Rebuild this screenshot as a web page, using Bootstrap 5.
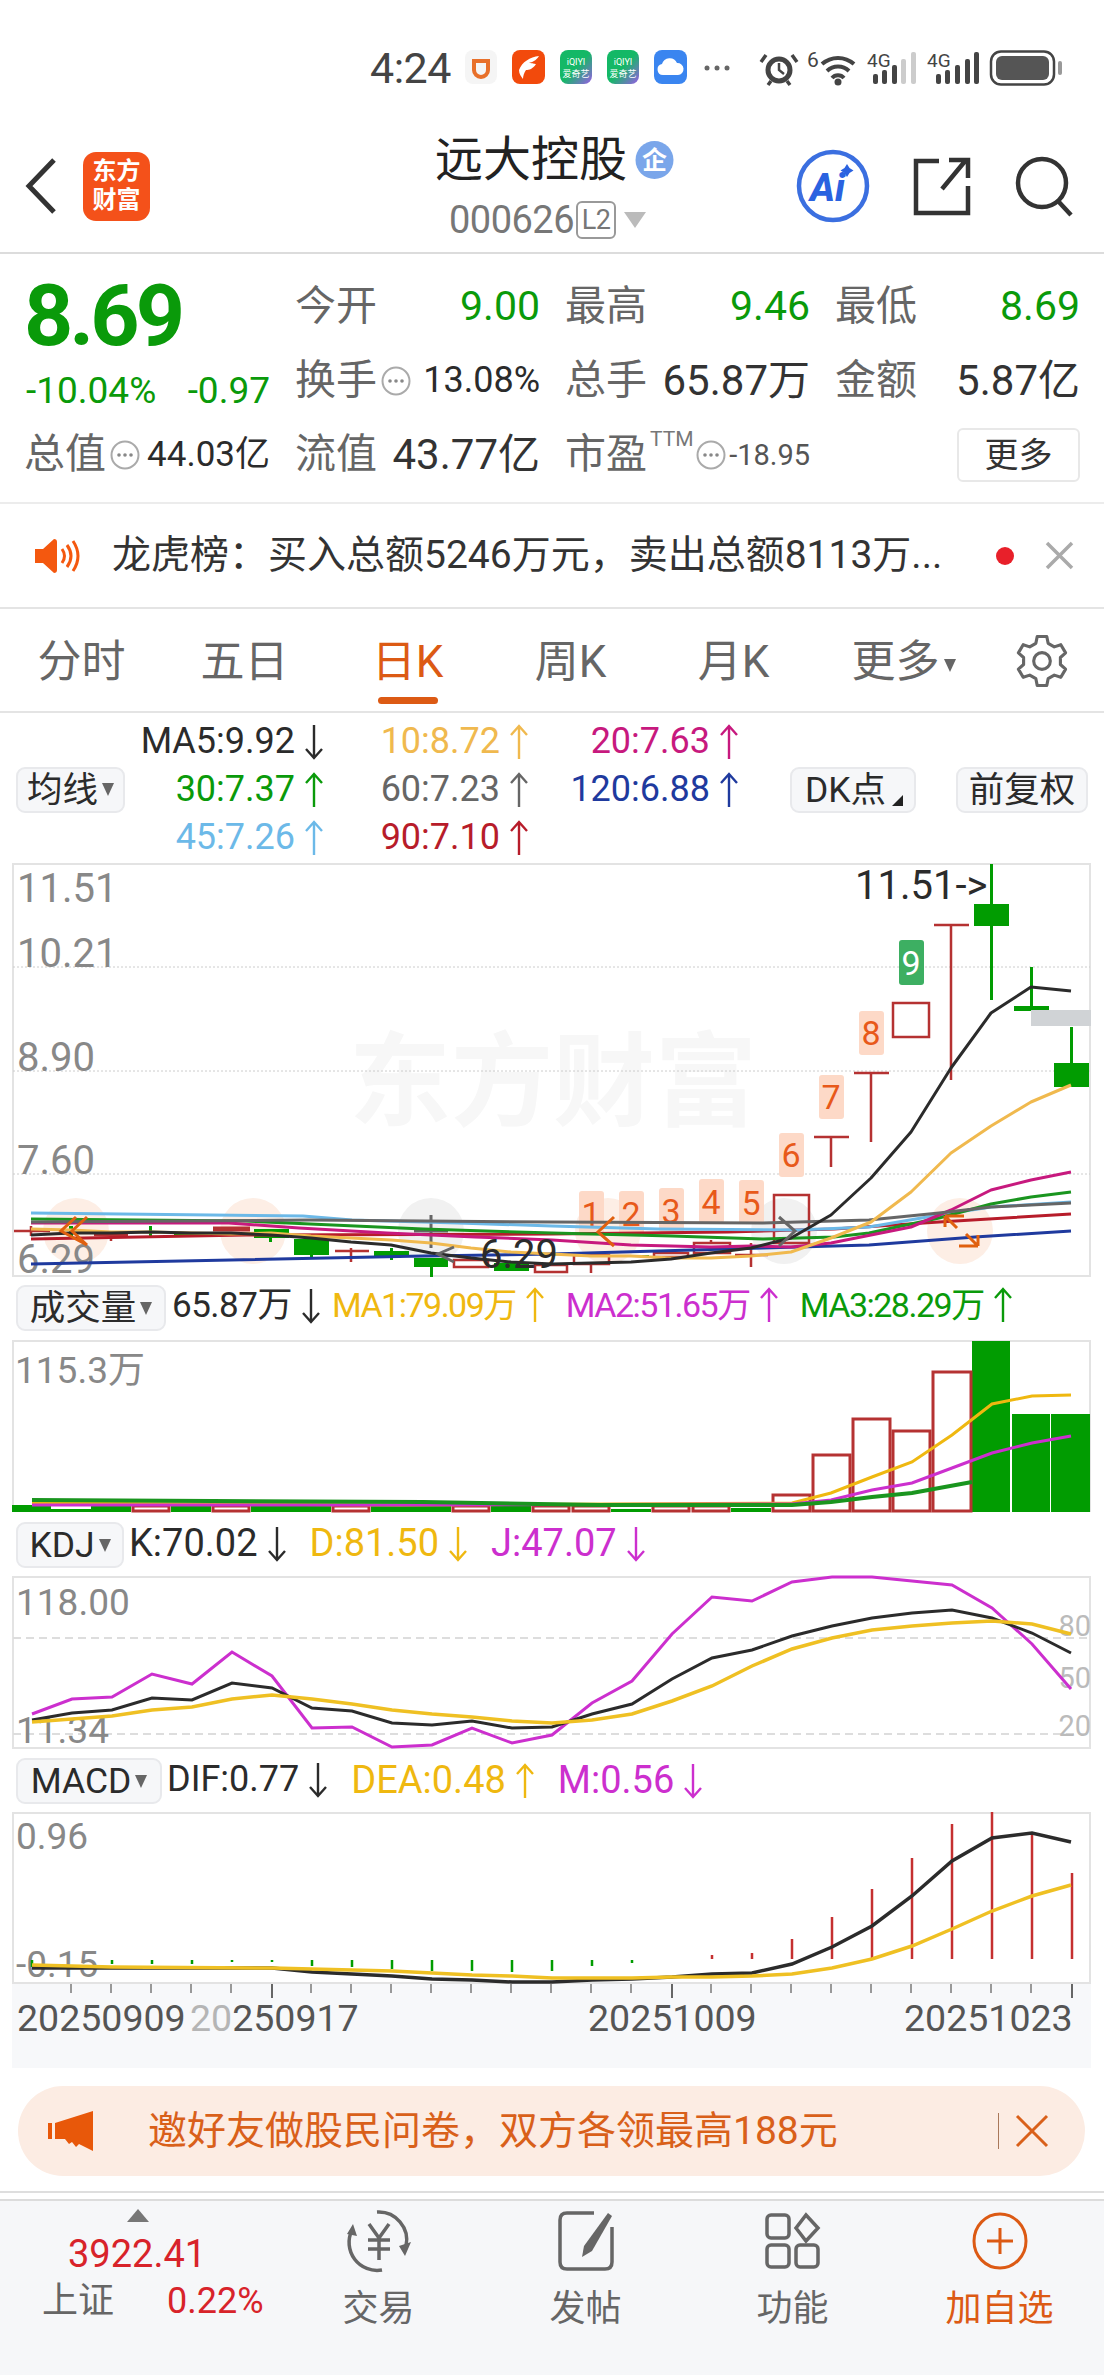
<!DOCTYPE html>
<html lang="zh-CN">
<head>
<meta charset="UTF-8">
<meta name="viewport" content="width=device-width, initial-scale=1.0">
<title>远大控股</title>
<link href="https://cdn.jsdelivr.net/npm/bootstrap@5.3.0/dist/css/bootstrap.min.css" rel="stylesheet">
<script src="https://cdn.jsdelivr.net/npm/bootstrap@5.3.0/dist/js/bootstrap.bundle.min.js"></script>
<style>
  html, body { margin: 0; background: #fff; }
  body { width: 1104px; height: 2376px; overflow: hidden; font-family: Roboto, "Noto Sans CJK SC", sans-serif; color: #2b2b2b; line-height: 1.2; }
  svg { display: block; flex: none; overflow: visible; }
  svg text { font-family: Roboto, "Noto Sans CJK SC", sans-serif; }
  .c-green { color: #0a9a0a; }
  .c-red { color: #d8232a; }
  .c-gray { color: #666; }

  .status-row { height: 100px; padding: 50px 0 0 370px; }
  .clock { font-size: 43px; width: 82px; color: #444; line-height: 36px; letter-spacing: -0.5px; }
  .app-ico { margin-right: 15px; }

  .head-row { height: 154px; display: grid; grid-template-columns: 1fr auto 1fr; border-bottom: 2px solid #dcdcdc; }
  .head-side { padding-top: 20px; }
  .logo-box { width: 67px; height: 69px; border-radius: 13px; background: #f4511a; color: #fff; font-size: 24px; line-height: 29px; font-weight: 700; text-align: center; padding-top: 5px; margin-left: 25px; }
  .title-col { padding-top: 30px; text-align: center; }
  .title-main { font-size: 48px; line-height: 60px; color: #222; margin-left: 5px; }
  .title-code { font-size: 38px; line-height: 60px; color: #777; letter-spacing: -0.5px; margin-left: -9px; }
  .l2-tag { font-size: 27px; line-height: 34px; height: 38px; width: 40px; border: 2px solid #999; border-radius: 6px; margin: 0 8px 0 2px; text-align: center; color: #777; }
  .tri-down { width: 0; height: 0; border-left: 11px solid transparent; border-right: 11px solid transparent; border-top: 16px solid #bbb; }
  .tri-small { width: 0; height: 0; border-left: 6px solid transparent; border-right: 6px solid transparent; border-top: 13px solid #666; margin-left: 4px; }
  .ico-gap { margin-left: 43px; }

  .quote-box { height: 250px; padding: 16px 0 0 24px; display: grid; grid-template-columns: 246px 245px 245px 245px; grid-auto-rows: 74px; column-gap: 25px; border-bottom: 2px solid #ececec; }
  .price-cell { grid-row: span 2; }
  .price-big { font-size: 86px; font-weight: 700; line-height: 86px; margin-top: 3px; letter-spacing: -4px; }
  .price-sub { font-size: 37px; line-height: 40px; margin: 12px 0 0 2px; }
  .q-label { font-size: 41px; color: #666; white-space: nowrap; }
  .q-val { font-size: 41px; }
  .q-mid { font-size: 36px; }
  .q-tight { font-size: 35px; }
  .q-num { font-size: 42px; color: #333; }
  .ttm-mark { font-size: 21px; color: #777; align-self: flex-start; margin: -3px 2px 0 3px; }
  .q-small { font-size: 29px; color: #555; }
  .more-btn { width: 123px; height: 54px; padding: 0; font-size: 34px; background: #fff; border: 2px solid #e8e8e8; color: #333; border-radius: 6px; }

  .notice-row { height: 105px; padding-left: 33px; border-bottom: 2px solid #e4e4e4; }
  .notice-text { font-size: 39px; margin-left: 33px; width: 888px; color: #333; white-space: nowrap; }
  .notice-dot { width: 18px; height: 18px; border-radius: 50%; background: #e8202a; margin: 0 31px 0 -4px; }

  .tab-row { height: 104px; border-bottom: 2px solid #e4e4e4; position: relative; }
  .tab-item { width: 163px; text-align: center; font-size: 44px; color: #666; padding-top: 26px; line-height: 54px; }
  .tab-on { color: #dc5a14; position: relative; }
  .tab-on::after { content: ""; position: absolute; left: 52px; top: 88px; width: 60px; height: 7px; border-radius: 4px; background: #dc5a14; }
  .tab-more { padding-left: 14px; }
  .gear-wrap { margin: 26px 0 0 38px; }

  .ma-row { height: 150px; padding: 3px 0 0 16px; }
  .ma-grid { display: grid; grid-template-columns: 200px 205px 210px; grid-auto-rows: 48px; }
  .ma-cell { font-size: 36px; justify-content: flex-end; display: flex; align-items: center; gap: 8px; white-space: nowrap; }
  .ctl-btn { height: 46px; padding: 0 6px; font-size: 35.5px; line-height: 42px; background: #f6f7f9; border: 2px solid #e8e9ec; border-radius: 9px; color: #2b2b2b; display: flex; align-items: center; justify-content: center; white-space: nowrap; }
  .dk-corner { width: 0; height: 0; border-left: 11px solid transparent; border-bottom: 11px solid #222; align-self: flex-end; margin: 0 -2px 5px 6px; }

  .ind-row { height: 63px; padding: 8px 0 0 16px; }
  .ind-txt { font-size: 38px; white-space: nowrap; gap: 8px; }
  .ind-vol { font-size: 35px; letter-spacing: -0.5px; margin-left: 6px; }
  .ind-ma { font-size: 34px; letter-spacing: -1.5px; margin-left: 20px; }
  .ind-ma1 { margin-left: 10px; }
  .ind-gap { margin-left: 22px; }
  .arr-ico { width: 22px; height: 38px; fill: none; stroke: currentColor; stroke-width: 2.4; }
  .c-blk { color: #2b2b2b; }
  .c-yel { color: #efb810; }
  .c-mag { color: #cc2fce; }
  .c-grn { color: #0a9a0a; }

  .promo-wrap { height: 125px; padding: 18px 19px 0 18px; border-bottom: 2px solid #dedede; }
  .promo-box { height: 90px; border-radius: 45px; background: #fcece3; color: #d9601a; padding: 0 36px 0 30px; }
  .promo-text { font-size: 39px; margin-left: 54px; white-space: nowrap; flex-grow: 1; }
  .promo-sep { width: 1px; height: 36px; background: #a9785a; margin-right: 16px; }

  .foot-row { margin-top: 6px; height: 176px; background: #f6f7f9; border-top: 2px solid #dcdcdc; }
  .idx-col { width: 276px; padding: 8px 0 0 42px; position: relative; }
  .tri-up { width: 0; height: 0; border-left: 11px solid transparent; border-right: 11px solid transparent; border-bottom: 13px solid #777; margin-left: 85px; }
  .idx-num { font-size: 38px; line-height: 44px; margin: 10px 0 0 26px; }
  .idx-line { font-size: 36px; line-height: 44px; margin-top: 3px; }
  .foot-cell { width: 207px; text-align: center; padding-top: 8px; font-size: 36px; line-height: 44px; color: #666; }
  .foot-ico { height: 64px; margin: 0 auto 14px; }
  .c-org { color: #dc5a14; }
</style>
</head>
<body>
<svg width="0" height="0" class="position-absolute">
  <symbol id="up" viewBox="0 0 22 38"><path d="M11 36V3M3 12L11 3L19 12"/></symbol>
  <symbol id="dn" viewBox="0 0 22 38"><path d="M11 2V35M3 26L11 35L19 26"/></symbol>
  <symbol id="dots" viewBox="0 0 30 30"><circle cx="15" cy="15" r="13.5" fill="none" stroke="#aaa" stroke-width="2"/><circle cx="9" cy="15" r="1.8" fill="#888"/><circle cx="15" cy="15" r="1.8" fill="#888"/><circle cx="21" cy="15" r="1.8" fill="#888"/></symbol>
  <linearGradient id="iq" x1="0" y1="0" x2="1" y2="1"><stop offset="0.5" stop-color="#14b866"/><stop offset="1" stop-color="#9a5be8"/></linearGradient>
</svg>

<!-- status bar -->
<div class="status-row d-flex align-items-start">
  <div class="clock">4:24</div>
  <svg class="app-ico" style="margin-left:13px" width="32" height="34" viewBox="0 0 32 34"><rect width="32" height="34" rx="8" fill="#f5f5f5"/><path d="M9 11h14v9a7 7 0 0 1-14 0z" fill="none" stroke="#e8702a" stroke-width="4"/></svg>
  <svg class="app-ico" width="33" height="34" viewBox="0 0 33 34"><rect width="33" height="34" rx="8" fill="#f24a0c"/><path d="M7 20C10 12 18 7 27 6C24 11 20 12 17 13C21 13 22 14 24 14C21 19 17 20 14 20C12 23 11 26 11 29C9 26 7 24 7 20z" fill="#fff"/></svg>
  <svg class="app-ico" width="32" height="34" viewBox="0 0 32 34"><rect width="32" height="34" rx="8" fill="url(#iq)"/><text x="16" y="15" font-size="9" fill="#fff" text-anchor="middle">iQIYI</text><text x="16" y="27" font-size="9" fill="#fff" text-anchor="middle">爱奇艺</text></svg>
  <svg class="app-ico" width="32" height="34" viewBox="0 0 32 34"><rect width="32" height="34" rx="8" fill="url(#iq)"/><text x="16" y="15" font-size="9" fill="#fff" text-anchor="middle">iQIYI</text><text x="16" y="27" font-size="9" fill="#fff" text-anchor="middle">爱奇艺</text></svg>
  <svg width="33" height="34" viewBox="0 0 33 34"><rect width="33" height="34" rx="8" fill="#3a85f0"/><path d="M9 25a5.500 5.500 0 0 1-1-10.900A8 8 0 0 1 23 13a6 6 0 0 1 1 12z" fill="#fff"/></svg>
  <svg width="380" height="36" viewBox="0 0 380 36">
    <g fill="#666"><circle cx="20" cy="18" r="2.500"/><circle cx="30" cy="18" r="2.500"/><circle cx="40" cy="18" r="2.500"/></g>
    <g fill="none" stroke="#444">
      <circle cx="92" cy="20" r="11" stroke-width="5"/><path d="M92 13v7l5 4" stroke-width="2.500"/>
      <path d="M79 5l-5 7M105 5l5 7M84 31l-3 4M100 31l3 4" stroke-width="3.500"/>
      <path d="M135 14a24 24 0 0 1 32 0M140 21a16 16 0 0 1 22 0M145 28a8 8 0 0 1 12 0" stroke-width="4"/>
    </g>
    <circle cx="151" cy="32" r="3.500" fill="#444"/>
    <text x="120" y="17" font-size="21" fill="#444">6</text>
    <text x="180" y="17" font-size="19" fill="#444">4G</text>
    <g fill="#444"><rect x="186" y="24" width="5" height="10" rx="2"/><rect x="195" y="20" width="5" height="14" rx="2"/><rect x="205" y="15" width="5" height="19" rx="2"/></g>
    <g fill="#ccc"><rect x="214" y="9" width="5" height="25" rx="2"/><rect x="224" y="2" width="5" height="32" rx="2"/></g>
    <text x="240" y="17" font-size="19" fill="#444">4G</text>
    <g fill="#444"><rect x="249" y="24" width="5" height="10" rx="2"/><rect x="258" y="20" width="5" height="14" rx="2"/><rect x="268" y="15" width="5" height="19" rx="2"/><rect x="278" y="9" width="5" height="25" rx="2"/><rect x="287" y="2" width="5" height="32" rx="2"/></g>
    <rect x="304" y="1.500" width="63" height="33" rx="10" fill="none" stroke="#444" stroke-width="2.500"/>
    <rect x="309" y="6" width="53" height="24" rx="6" fill="#555"/>
    <rect x="371" y="11" width="4" height="14" rx="2" fill="#999"/>
  </svg>
</div>

<!-- header -->
<div class="head-row">
  <div class="head-side d-flex align-items-center ps-4">
    <svg width="34" height="56" viewBox="0 0 34 56"><path d="M30 2L5 28L30 54" fill="none" stroke="#333" stroke-width="5"/></svg>
    <div class="logo-box">东方<br>财富</div>
  </div>
  <div class="title-col">
    <div class="title-main d-flex align-items-center justify-content-center gap-2">远大控股
      <svg width="39" height="38" viewBox="0 0 39 38"><circle cx="19.500" cy="19" r="19" fill="#7aa6ea"/><text x="19.500" y="28" font-size="25" font-weight="700" fill="#fff" text-anchor="middle">企</text></svg>
    </div>
    <div class="title-code d-flex align-items-center justify-content-center">000626<span class="l2-tag">L2</span><span class="tri-down"></span></div>
  </div>
  <div class="head-side d-flex align-items-center justify-content-end">
    <svg width="74" height="74" viewBox="0 0 74 74"><circle cx="37" cy="37" r="34" fill="none" stroke="#3b6fe0" stroke-width="4.500"/><text x="14" y="52" font-size="38" font-weight="800" font-style="italic" fill="#2a62e0">Ai</text><path d="M51 15l2.500 4 4 2.500-4 2.500-2.500 4-2.500-4-4-2.500 4-2.500z" fill="#2a62e0"/></svg>
    <svg class="ico-gap" width="58" height="60" viewBox="0 0 58 60"><path d="M26 5H3V57H55V30M29 33L53 4M36 4H55V22" fill="none" stroke="#333" stroke-width="4.500"/></svg>
    <svg class="ico-gap" style="margin-right:30px" width="60" height="60" viewBox="0 0 60 60"><circle cx="28" cy="27" r="24" fill="none" stroke="#333" stroke-width="4.500"/><path d="M44 45L57 59" stroke="#333" stroke-width="4.500"/></svg>
  </div>
</div>

<!-- quote -->
<div class="quote-box">
  <div class="price-cell c-green">
    <div class="price-big">8.69</div>
    <div class="price-sub d-flex justify-content-between"><span>-10.04%</span><span>-0.97</span></div>
  </div>
  <div class="d-flex justify-content-between align-items-center"><span class="q-label">今开</span><span class="q-val c-green">9.00</span></div>
  <div class="d-flex justify-content-between align-items-center"><span class="q-label">最高</span><span class="q-val c-green">9.46</span></div>
  <div class="d-flex justify-content-between align-items-center"><span class="q-label">最低</span><span class="q-val c-green">8.69</span></div>
  <div class="d-flex justify-content-between align-items-center"><span class="d-flex align-items-center gap-1"><span class="q-label">换手</span><svg width="30" height="30"><use href="#dots"/></svg></span><span class="q-mid">13.08%</span></div>
  <div class="d-flex justify-content-between align-items-center"><span class="q-label">总手</span><span class="q-num">65.87万</span></div>
  <div class="d-flex justify-content-between align-items-center"><span class="q-label">金额</span><span class="q-num">5.87亿</span></div>
  <div class="d-flex justify-content-between align-items-center"><span class="d-flex align-items-center gap-1"><span class="q-label">总值</span><svg width="30" height="30"><use href="#dots"/></svg></span><span class="q-tight">44.03亿</span></div>
  <div class="d-flex justify-content-between align-items-center"><span class="q-label">流值</span><span class="q-num">43.77亿</span></div>
  <div class="d-flex justify-content-between align-items-center"><span class="d-flex align-items-center"><span class="q-label">市盈</span><span class="ttm-mark">TTM</span><svg width="30" height="30"><use href="#dots"/></svg></span><span class="q-small">-18.95</span></div>
  <div class="d-flex justify-content-end align-items-center"><button class="btn more-btn" type="button">更多</button></div>
</div>

<!-- notice -->
<div class="notice-row d-flex align-items-center">
  <svg width="46" height="36" viewBox="0 0 46 36"><path d="M2 11h8L21 1q3 0 3 3V32q0 3-3 3L10 25H2z" fill="#f4580f"/><path d="M29 11q5 7 0 14M34 7q8 11 0 22M40 3q10 15 0 30" fill="none" stroke="#f4580f" stroke-width="3"/></svg>
  <div class="notice-text">龙虎榜：买入总额5246万元，卖出总额8113万...</div>
  <div class="notice-dot"></div>
  <svg width="29" height="29" viewBox="0 0 29 29"><path d="M2 2L27 27M27 2L2 27" stroke="#aaa" stroke-width="3.500"/></svg>
</div>

<!-- tabs -->
<div class="tab-row d-flex">
  <div class="tab-item">分时</div>
  <div class="tab-item">五日</div>
  <div class="tab-item tab-on">日K</div>
  <div class="tab-item">周K</div>
  <div class="tab-item">月K</div>
  <div class="tab-item tab-more d-flex justify-content-center"><span>更多</span><span class="tri-small mt-4"></span></div>
  <div class="gear-wrap">
    <svg width="52" height="52" viewBox="0 0 50 50"><path d="M20.400 1.400L29.600 1.400L30.900 8L36.800 11.400L43.100 9.300L47.700 17.200L42.700 21.600L42.700 28.400L47.700 32.800L43.100 40.700L36.800 38.600L30.900 42L29.600 48.600L20.400 48.600L19.100 42L13.200 38.600L6.900 40.700L2.300 32.800L7.300 28.400L7.300 21.600L2.300 17.200L6.900 9.300L13.200 11.400L19.100 8z" fill="none" stroke="#666" stroke-width="3" stroke-linejoin="round"/><circle cx="25" cy="25" r="8" fill="none" stroke="#666" stroke-width="3"/></svg>
  </div>
</div>

<!-- moving averages -->
<div class="ma-row d-flex align-items-center">
  <button class="btn ctl-btn" style="width:109px" type="button">均线<span class="tri-small"></span></button>
  <div class="ma-grid">
    <div class="ma-cell c-blk">MA5:9.92<svg class="arr-ico"><use href="#dn"/></svg></div>
    <div class="ma-cell" style="color:#f0b94e">10:8.72<svg class="arr-ico"><use href="#up"/></svg></div>
    <div class="ma-cell" style="color:#c7197e">20:7.63<svg class="arr-ico"><use href="#up"/></svg></div>
    <div class="ma-cell c-grn">30:7.37<svg class="arr-ico"><use href="#up"/></svg></div>
    <div class="ma-cell" style="color:#666">60:7.23<svg class="arr-ico"><use href="#up"/></svg></div>
    <div class="ma-cell" style="color:#1f3a9e">120:6.88<svg class="arr-ico"><use href="#up"/></svg></div>
    <div class="ma-cell" style="color:#6cb9e8">45:7.26<svg class="arr-ico"><use href="#up"/></svg></div>
    <div class="ma-cell" style="color:#b71c2a">90:7.10<svg class="arr-ico"><use href="#up"/></svg></div>
  </div>
  <button class="btn ctl-btn" style="width:126px;margin-left:50px" type="button">DK点<span class="dk-corner"></span></button>
  <button class="btn ctl-btn" style="width:132px;margin-left:40px" type="button">前复权</button>
</div>

<!-- k-line chart -->
<svg width="1104" height="414" viewBox="0 863 1104 414">
  <rect x="13" y="864" width="1077" height="412" fill="#fff" stroke="#e3e3e3" stroke-width="2"/>
  <text x="349" y="1118" font-size="102" font-weight="700" fill="#f7f7f7">东方财富</text>
  <path d="M13 967H1090M13 1071H1090M13 1174H1090" stroke="#ccc" stroke-dasharray="2 2"/>
  <g fill="#fdeee5"><circle cx="76" cy="1231" r="33"/><circle cx="253" cy="1231" r="33"/><circle cx="608" cy="1231" r="33"/><circle cx="960" cy="1231" r="33"/></g>
  <g fill="#f1f1f1"><circle cx="431" cy="1231" r="33"/><circle cx="784" cy="1231" r="33"/></g>
  <g fill="#888" font-size="40">
    <text x="17" y="902">11.51</text><text x="17" y="967">10.21</text><text x="17" y="1071">8.90</text><text x="17" y="1174">7.60</text><text x="17" y="1273">6.29</text>
  </g>
  <g fill="#fdd9c7">
    <rect x="579" y="1191" width="25" height="44" rx="3"/><rect x="619" y="1191" width="25" height="44" rx="3"/><rect x="659" y="1188" width="25" height="44" rx="3"/><rect x="699" y="1179" width="25" height="44" rx="3"/><rect x="739" y="1180" width="25" height="44" rx="3"/><rect x="779" y="1133" width="25" height="44" rx="3"/><rect x="819" y="1075" width="25" height="44" rx="3"/><rect x="859" y="1011" width="25" height="44" rx="3"/>
  </g>
  <rect x="899" y="940" width="25" height="45" rx="3" fill="#3daf62"/>
  <g font-size="34" fill="#e8591a" text-anchor="middle">
    <text x="591" y="1226">1</text><text x="631" y="1226">2</text><text x="671" y="1223">3</text><text x="711" y="1214">4</text><text x="751" y="1215">5</text><text x="791" y="1167">6</text><text x="831" y="1109">7</text><text x="871" y="1045">8</text><text x="911" y="975" fill="#fff">9</text>
  </g>
  <!-- red candles -->
  <g fill="none" stroke="#b53232" stroke-width="2.500">
    <path d="M14 1231H50M31 1226V1236M94 1235H128M111 1235V1241M335 1251H369M351 1248V1262M735 1255H768M751 1243V1267"/>
    <path d="M213 1229H250" stroke-width="5"/>
    <rect x="454" y="1260" width="34" height="7"/><rect x="535" y="1265" width="32" height="7"/><rect x="574" y="1255" width="35" height="9"/><path d="M591 1264V1273"/><rect x="654" y="1253" width="34" height="4"/><rect x="694" y="1243" width="36" height="10"/><path d="M711 1243V1240"/>
    <rect x="774" y="1195" width="35" height="48"/><rect x="893" y="1003" width="36" height="34"/>
    <path d="M814 1137H849M831 1137V1167M854 1073H889M871 1073V1142M934 925H969M951 925V1080"/>
  </g>
  <!-- green candles -->
  <g fill="#019c01">
    <rect x="69" y="1226" width="4" height="12"/><rect x="149" y="1226" width="3" height="12"/><rect x="174" y="1234" width="34" height="2"/><rect x="254" y="1229" width="35" height="9"/><rect x="269" y="1238" width="3" height="4"/><rect x="294" y="1239" width="35" height="16"/><rect x="310" y="1255" width="3" height="4"/>
    <rect x="374" y="1251" width="35" height="5"/><rect x="390" y="1248" width="3" height="12"/><rect x="414" y="1258" width="34" height="9"/><rect x="430" y="1267" width="3" height="10"/><rect x="494" y="1263" width="35" height="8"/><rect x="629" y="1255" width="20" height="2"/>
    <rect x="974" y="904" width="35" height="22"/><rect x="990" y="864" width="3" height="136"/><rect x="1014" y="1006" width="35" height="5"/><rect x="1030" y="967" width="3" height="41"/><rect x="1054" y="1063" width="35" height="24"/><rect x="1070" y="1027" width="3" height="36"/>
  </g>
  <path d="M431 1215V1248M414 1231H448" stroke="#666" stroke-width="3" fill="none"/>
  <rect x="1031" y="1010" width="60" height="16" fill="#d0d3d6"/>
  <!-- averages -->
  <g fill="none" stroke-width="3" stroke-linejoin="round">
    <polyline stroke="#1f3a9e" points="31,1264 423,1256 552,1254 763,1248 869,1245 975,1237 1071,1231"/>
    <polyline stroke="#b71c2a" points="31,1239 246,1235 552,1234 728,1232 834,1229 939,1222 1071,1214"/>
    <polyline stroke="#6cb9e8" points="31,1213 303,1216 352,1220 458,1223 552,1226 658,1229 798,1230 869,1227 939,1215 991,1207 1071,1202"/>
    <polyline stroke="#1a951f" points="31,1219 246,1221 310,1224 423,1229 552,1233 672,1236 763,1239 834,1237 869,1233 939,1218 991,1204 1031,1197 1071,1192"/>
    <polyline stroke="#c7197e" points="31,1223 229,1223 299,1228 387,1233 475,1237 552,1240 631,1245 711,1247 751,1246 791,1247 831,1243 871,1235 911,1227 951,1210 991,1190 1031,1180 1071,1172"/>
    <polyline stroke="#666" points="31,1222 310,1220 552,1222 763,1223 869,1220 939,1213 991,1207 1071,1203"/>
    <polyline stroke="#f0b94e" points="31,1229 71,1230 111,1232 151,1232 191,1233 231,1234 271,1233 311,1236 391,1240 431,1243 471,1248 511,1252 551,1254 591,1256 631,1256 671,1258 711,1258 751,1256 791,1252 831,1238 871,1222 911,1192 951,1153 991,1126 1031,1102 1071,1085"/>
    <polyline stroke="#2b2b2b" points="31,1235 71,1233 111,1233 151,1232 191,1233 231,1233 271,1235 311,1238 351,1242 391,1245 431,1253 471,1258 511,1262 552,1264 591,1263 631,1262 671,1259 711,1253 751,1248 791,1238 831,1215 871,1178 911,1132 951,1068 991,1013 1031,987 1071,991"/>
  </g>
  <!-- interval markers -->
  <g fill="none" stroke="#e0600f" stroke-width="3">
    <path d="M76 1217L61 1231L87 1245M87 1217L72 1231L87 1245" />
    <path d="M614 1217L598 1232L614 1246"/>
    <path d="M945 1216h19M945 1216l12 12M978 1246h-19M978 1246l-12-12M945 1216v11M978 1246v-11"/>
  </g>
  <g fill="none" stroke="#666" stroke-width="3"><path d="M779 1217L795 1231L779 1246"/><path d="M454 1247L438 1254L454 1262"/></g>
  <text x="480" y="1268" font-size="40" fill="#2b2b2b">6.29</text>
  <text x="855" y="899" font-size="40" fill="#2b2b2b">11.51-&gt;</text>
</svg>

<!-- volume -->
<div class="ind-row d-flex align-items-start">
  <button class="btn ctl-btn" style="width:150px" type="button">成交量<span class="tri-small"></span></button>
  <div class="ind-txt ind-vol d-flex align-items-center c-blk">65.87万<svg class="arr-ico"><use href="#dn"/></svg></div>
  <div class="ind-txt ind-ma ind-ma1 d-flex align-items-center c-yel">MA1:79.09万<svg class="arr-ico"><use href="#up"/></svg></div>
  <div class="ind-txt ind-ma d-flex align-items-center c-mag">MA2:51.65万<svg class="arr-ico"><use href="#up"/></svg></div>
  <div class="ind-txt ind-ma d-flex align-items-center c-grn">MA3:28.29万<svg class="arr-ico"><use href="#up"/></svg></div>
</div>
<svg width="1104" height="173" viewBox="0 1340 1104 173">
  <path d="M13 1512V1341H1090V1512" fill="none" stroke="#e3e3e3" stroke-width="2"/>
  <text x="15" y="1383" font-size="37" fill="#888">115.3万</text>
  <g fill="#019c01">
    <rect x="12" y="1505" width="39" height="7"/><rect x="51" y="1509" width="40" height="3"/><rect x="91" y="1506" width="40" height="6"/><rect x="171" y="1506" width="40" height="6"/><rect x="251" y="1506" width="40" height="6"/><rect x="291" y="1506" width="40" height="6"/><rect x="371" y="1506" width="40" height="6"/><rect x="411" y="1506" width="40" height="6"/><rect x="491" y="1506" width="40" height="6"/><rect x="611" y="1509" width="40" height="3"/><rect x="731" y="1508" width="40" height="4"/>
    <rect x="972" y="1341" width="38" height="171"/><rect x="1012" y="1414" width="38" height="98"/><rect x="1051" y="1414" width="39" height="98"/>
  </g>
  <g fill="#fff" stroke="#b53232" stroke-width="3">
    <rect x="133" y="1506" width="36" height="5"/><rect x="213" y="1506" width="36" height="5"/><rect x="333" y="1506" width="36" height="5"/><rect x="453" y="1506" width="36" height="5"/><rect x="533" y="1506" width="36" height="5"/><rect x="573" y="1506" width="36" height="5"/><rect x="653" y="1506" width="36" height="5"/><rect x="693" y="1506" width="36" height="5"/>
    <rect x="773" y="1495" width="37" height="16"/><rect x="813" y="1455" width="37" height="56"/><rect x="853" y="1419" width="37" height="92"/><rect x="893" y="1431" width="37" height="80"/><rect x="933" y="1372" width="38" height="139"/>
  </g>
  <g fill="none" stroke-width="3">
    <polyline stroke="#efb810" points="32,1503 400,1505 792,1503 831,1493 872,1477 912,1462 952,1435 992,1404 1032,1396 1071,1395"/>
    <polyline stroke="#cc2fce" points="32,1505 400,1505 792,1504 831,1500 872,1490 912,1483 952,1468 992,1453 1032,1443 1071,1436"/>
    <polyline stroke="#1a951f" stroke-width="4" points="32,1500 423,1502 600,1505 792,1505 831,1502 872,1497 912,1493 972,1482"/>
  </g>
</svg>

<!-- kdj -->
<div class="ind-row d-flex align-items-start">
  <button class="btn ctl-btn" style="width:108px;margin-top:1px" type="button">KDJ<span class="tri-small"></span></button>
  <div class="ind-txt d-flex align-items-center c-blk" style="margin-left:5px">K:70.02<svg class="arr-ico"><use href="#dn"/></svg></div>
  <div class="ind-txt ind-gap d-flex align-items-center c-yel">D:81.50<svg class="arr-ico"><use href="#dn"/></svg></div>
  <div class="ind-txt ind-gap d-flex align-items-center c-mag">J:47.07<svg class="arr-ico"><use href="#dn"/></svg></div>
</div>
<svg width="1104" height="174" viewBox="0 1575 1104 174">
  <rect x="13" y="1576" width="1077" height="171" fill="#fff" stroke="#e3e3e3" stroke-width="2"/>
  <path d="M13 1637H1090M13 1733H1090" stroke="#ddd" stroke-width="2" stroke-dasharray="8 5"/>
  <g font-size="37" fill="#888"><text x="16" y="1614">118.00</text><text x="16" y="1742">11.34</text></g>
  <g font-size="29" fill="#bbb" text-anchor="end"><text x="1091" y="1635">80</text><text x="1091" y="1687">50</text><text x="1091" y="1735">20</text></g>
  <g fill="none" stroke-width="3">
    <polyline stroke="#cc2fce" points="32,1713 72,1698 112,1696 152,1673 192,1683 232,1651 272,1675 312,1727 352,1726 392,1746 432,1744 472,1727 512,1742 552,1734 592,1702 632,1680 672,1633 712,1596 752,1600 792,1581 832,1576 872,1576 912,1580 952,1584 992,1607 1032,1643 1071,1688"/>
    <polyline stroke="#2b2b2b" points="32,1719 72,1712 112,1709 152,1697 192,1699 232,1682 272,1687 312,1707 352,1710 392,1722 432,1724 472,1720 512,1727 552,1726 592,1713 632,1703 672,1678 712,1657 752,1649 792,1635 832,1625 872,1617 912,1612 952,1609 992,1617 1032,1632 1071,1652"/>
    <polyline stroke="#efc023" stroke-width="3.500" points="32,1721 72,1718 112,1715 152,1709 192,1706 232,1698 272,1694 312,1698 352,1703 392,1709 432,1713 472,1716 512,1720 552,1722 592,1719 632,1713 672,1700 712,1685 752,1665 792,1648 832,1637 872,1629 912,1625 952,1622 992,1620 1032,1623 1071,1633"/>
  </g>
</svg>

<!-- macd -->
<div class="ind-row d-flex align-items-start" style="height:62px">
  <button class="btn ctl-btn" style="width:146px" type="button">MACD<span class="tri-small"></span></button>
  <div class="ind-txt d-flex align-items-center c-blk" style="margin-left:5px;font-size:36px">DIF:0.77<svg class="arr-ico"><use href="#dn"/></svg></div>
  <div class="ind-txt ind-gap d-flex align-items-center c-yel">DEA:0.48<svg class="arr-ico"><use href="#up"/></svg></div>
  <div class="ind-txt ind-gap d-flex align-items-center c-mag">M:0.56<svg class="arr-ico"><use href="#dn"/></svg></div>
</div>
<svg width="1104" height="256" viewBox="0 1811 1104 256">
  <rect x="12" y="1982" width="1079" height="85" fill="#f7f8fa"/>
  <rect x="13" y="1812" width="1077" height="170" fill="#fff" stroke="#e3e3e3" stroke-width="2"/>
  <g font-size="37" fill="#888"><text x="16" y="1848">0.96</text><text x="16" y="1976">-0.15</text></g>
  <path d="M32 1959V1966M112 1959V1963M152 1959V1963M192 1959V1963M232 1959V1961M272 1959V1961M312 1959V1965M352 1959V1966M392 1959V1968M432 1959V1970M472 1959V1970M512 1959V1971M552 1959V1970M592 1959V1965M632 1959V1962" stroke="#019c01" stroke-width="2.500"/>
  <path d="M712 1958V1954M752 1958V1952M792 1958V1938M832 1958V1916M872 1958V1888M912 1958V1857M952 1958V1823M992 1958V1811M1032 1958V1832M1072 1958V1872" stroke="#c53030" stroke-width="2.500"/>
  <g fill="none" stroke-width="3">
    <polyline stroke="#2b2b2b" stroke-width="3.500" points="32,1967 272,1967 312,1971 352,1973 392,1975 432,1978 472,1979 512,1981 552,1981 592,1979 632,1978 672,1976 712,1973 752,1972 792,1963 832,1946 872,1925 912,1895 952,1860 992,1837 1032,1832 1071,1841"/>
    <polyline stroke="#efc023" stroke-width="3.500" points="32,1964 112,1966 272,1967 312,1968 352,1969 392,1970 432,1972 472,1974 512,1975 552,1977 592,1977 632,1977 672,1976 712,1976 752,1975 792,1973 832,1967 872,1958 912,1945 952,1928 992,1910 1032,1895 1071,1884"/>
  </g>
  <path d="M71 1983v9M111 1983v9M151 1983v9M191 1983v9M231 1983v9M311 1983v9M351 1983v9M391 1983v9M431 1983v9M471 1983v9M511 1983v9M551 1983v9M591 1983v9M631 1983v9M711 1983v9M751 1983v9M791 1983v9M831 1983v9M871 1983v9M911 1983v9M951 1983v9M991 1983v9M1031 1983v9" stroke="#999" stroke-width="2"/>
  <path d="M272 1983v14M672 1983v14M1072 1983v14" stroke="#666" stroke-width="2"/>
  <g font-size="37.500" fill="#555">
    <text x="17" y="2030">20250909</text>
    <text x="190" y="2030"><tspan fill="#b5b5b5">20</tspan>250917</text>
    <text x="588" y="2030">20251009</text>
    <text x="904" y="2030">20251023</text>
  </g>
</svg>

<!-- promo -->
<div class="promo-wrap">
  <div class="promo-box d-flex align-items-center">
    <svg width="46" height="40" viewBox="0 0 46 40"><rect x="0" y="12" width="4" height="16" fill="#e8580a"/><path d="M7 12L45 0V40L31 33L28 36L24 31L21 33L17 28H7z" fill="#e8580a"/></svg>
    <div class="promo-text">邀好友做股民问卷，双方各领最高188元</div>
    <div class="promo-sep"></div>
    <svg width="34" height="34" viewBox="0 0 34 34"><path d="M2 2L32 32M32 2L2 32" stroke="#d9601a" stroke-width="3"/></svg>
  </div>
</div>

<!-- bottom bar -->
<div class="foot-row d-flex">
  <div class="idx-col">
    <div class="tri-up"></div>
    <div class="idx-num c-red">3922.41</div>
    <div class="idx-line d-flex"><span class="c-gray">上证</span><span class="c-red" style="margin-left:53px">0.22%</span></div>
  </div>
  <div class="foot-cell" style="margin-left:-1px">
    <svg class="foot-ico" width="68" height="62" viewBox="0 0 68 62"><path d="M32 2A28 28 0 0 1 61 36M37 60A28 28 0 0 1 7 20" fill="none" stroke="#666" stroke-width="3.500"/><path d="M2 24L8 14L12 26zM66 32L60 46L54 36z" fill="#666"/><path d="M24 14L34 28L44 14M34 28V50M23 30H45M23 39H45" fill="none" stroke="#666" stroke-width="3.500"/></svg>
    <div>交易</div>
  </div>
  <div class="foot-cell">
    <svg class="foot-ico" width="56" height="60" viewBox="0 0 56 60"><path d="M36 2H9Q2 2 2 9V51Q2 58 9 58H47Q54 58 54 51V16" fill="none" stroke="#666" stroke-width="3.500"/><path d="M50 2L54 5L34 40L24 46L26 35z" fill="#666"/></svg>
    <div>发帖</div>
  </div>
  <div class="foot-cell">
    <svg class="foot-ico" width="56" height="56" viewBox="0 0 56 56"><g fill="none" stroke="#666" stroke-width="3.500"><rect x="2" y="2" width="22" height="23" rx="4"/><path d="M41 2L53 15L41 28L31 15z"/><rect x="2" y="32" width="22" height="22" rx="4"/><rect x="31" y="32" width="22" height="22" rx="4"/></g></svg>
    <div>功能</div>
  </div>
  <div class="foot-cell c-org">
    <svg class="foot-ico" width="56" height="58" viewBox="0 0 56 58"><ellipse cx="28" cy="29" rx="26" ry="27" fill="none" stroke="#dc5a14" stroke-width="3"/><path d="M15 29H41M28 16V42" stroke="#dc5a14" stroke-width="3"/></svg>
    <div>加自选</div>
  </div>
</div>
</body>
</html>
